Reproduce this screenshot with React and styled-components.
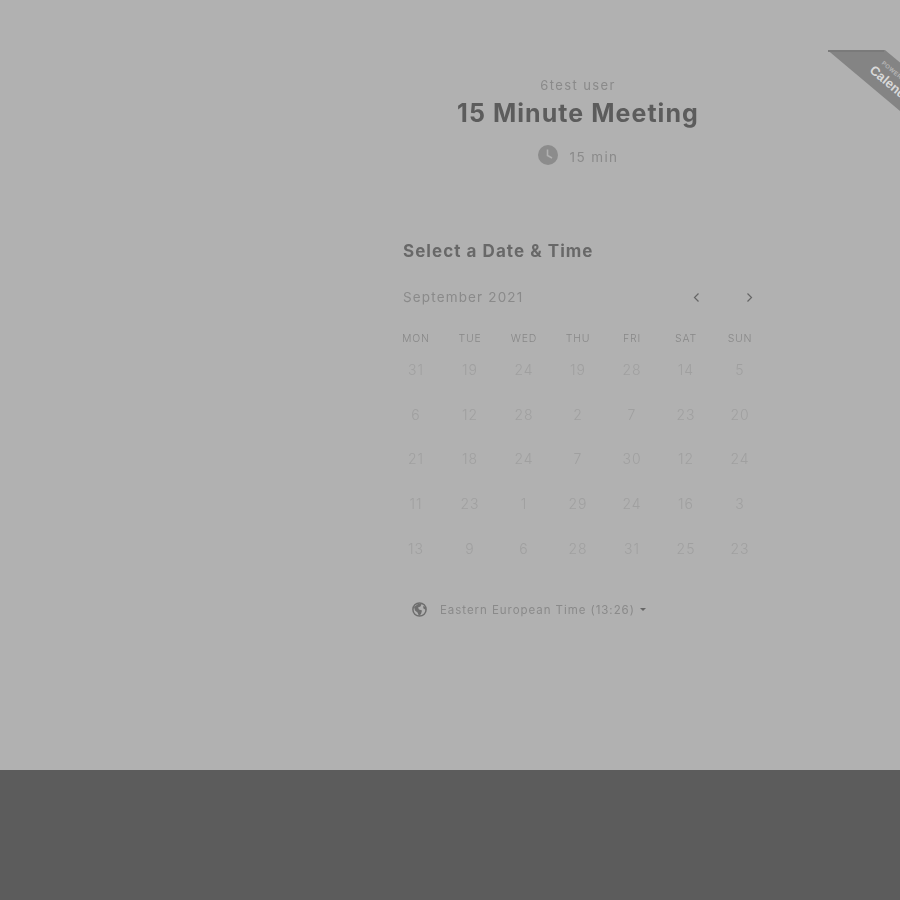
import React from 'react'
import styled, { createGlobalStyle } from 'styled-components'

const Global = createGlobalStyle`
html, body {
    margin: 0;
    padding: 0;
    background: #b1b1b1;
    font-family: "Inter", "Liberation Sans", sans-serif;
}
`
const Page = styled.div`
width: 900px;
height: 900px;
display: flex;
flex-direction: column;
position: relative;
overflow: hidden;
`
const Panel = styled.main`
height: 770px;
background: #b1b1b1;
padding: 75px 0 0 389px;
box-sizing: border-box;
filter: blur(0.4px);
`
const Footer = styled.footer`
flex: 1;
background: #5c5c5c;
`
const Column = styled.div`
width: 378px;
display: flex;
flex-direction: column;
`
const Header = styled.header`
display: flex;
flex-direction: column;
align-items: center;
`
const Host = styled.div`
font-size: 13px;
line-height: 20px;
letter-spacing: 1.4px;
color: #8a8a8a;
`
const Title = styled.h1`
margin: 2px 0 0;
font-size: 25px;
line-height: 32px;
font-weight: 700;
letter-spacing: 1.05px;
color: #5c5c5c;
`
const Duration = styled.div`
margin-top: 16px;
display: flex;
align-items: center;
gap: 12px;
font-size: 13.5px;
letter-spacing: 1.4px;
color: #8a8a8a;
height: 24px;
svg {
    margin-top: -4px;
}
`
const Picker = styled.section`
margin-top: 70px;
padding: 0 13px 0 14px;
display: flex;
flex-direction: column;
`
const Heading = styled.h2`
margin: 0;
font-size: 17px;
line-height: 24px;
font-weight: 700;
letter-spacing: 1.05px;
color: #686868;
`
const MonthRow = styled.div`
margin-top: 22px;
height: 24px;
display: flex;
align-items: center;
justify-content: space-between;
`
const Month = styled.span`
font-size: 13.5px;
letter-spacing: 1.15px;
color: #8a8a8a;
`
const Arrows = styled.div`
display: flex;
gap: 42px;
margin-right: -1px;
`
const Arrow = styled.svg`
width: 11px;
height: 11px;
fill: none;
stroke: #666;
stroke-width: 1.2;
display: block;
`
const Grid = styled.div`
margin: 20px -13px 0 -14px;
display: grid;
grid-template-columns: repeat(7, 54px);
grid-template-rows: 18px repeat(5, 44.8px);
`
const WeekDay = styled.div`
display: flex;
align-items: center;
justify-content: center;
font-size: 10.5px;
font-weight: 300;
letter-spacing: 0.8px;
color: #888;
`
const Day = styled.div`
display: flex;
align-items: center;
justify-content: center;
font-size: 14px;
font-weight: 300;
letter-spacing: 1px;
color: #a0a0a0;
`
const Zone = styled.div`
margin-top: 27px;
padding-left: 9px;
height: 24px;
display: flex;
align-items: center;
font-size: 11.5px;
letter-spacing: 0.95px;
color: #8a8a8a;
svg {
    margin-right: 13px;
}
`
const Caret = styled.span`
width: 0;
height: 0;
margin-left: 5px;
border-left: 3px solid transparent;
border-right: 3px solid transparent;
border-top: 3px solid #666;
`
const Corner = styled.div`
position: absolute;
top: 50px;
right: 0;
width: 72px;
height: 72px;
overflow: hidden;
`
const Band = styled.div`
position: absolute;
left: -13px;
top: 13.7px;
width: 160px;
height: 36.6px;
transform: rotate(40deg);
background: #848484;
display: flex;
flex-direction: column;
align-items: center;
justify-content: center;
font-family: "Liberation Sans", sans-serif;
`
const Powered = styled.div`
font-size: 6px;
line-height: 8px;
font-weight: 700;
letter-spacing: 0.4px;
color: #b4b4b4;
`
const Brand = styled.div`
font-size: 13px;
line-height: 15px;
font-weight: 700;
color: #d9d9d9;
`
const Fold = styled.div`
position: absolute;
top: 0;
left: 0;
width: 56px;
height: 2px;
background: #7a7a7a;
`

const DAYS = ['MON', 'TUE', 'WED', 'THU', 'FRI', 'SAT', 'SUN']
const DATES = [
    31, 19, 24, 19, 28, 14, 5,
    6, 12, 28, 2, 7, 23, 20,
    21, 18, 24, 7, 30, 12, 24,
    11, 23, 1, 29, 24, 16, 3,
    13, 9, 6, 28, 31, 25, 23,
]

const ClockIcon = () => (
    <svg width="20" height="20" viewBox="0 0 20 20">
        <circle cx="10" cy="10" r="10" fill="#8c8c8c" />
        <path d="M9.5 4.5V10.5L14 13" fill="none" stroke="#b1b1b1" strokeWidth="1.6" />
    </svg>
)

const GlobeIcon = () => (
    <svg width="15" height="15" viewBox="0 0 15 15">
        <circle cx="7.5" cy="7.5" r="6.6" fill="#b1b1b1" stroke="#6e6e6e" strokeWidth="1.5" />
        <path d="M2 5 L6 2 L9.5 2 L8.5 4.5 L6 5.5 L7 7.5 L10 8.5 L9 12 L7 14 L5.5 10.5 L3 8.5 Z" fill="#6e6e6e" />
        <path d="M11 4 L14 5.5 L14 8 L11.5 6.5 Z" fill="#6e6e6e" />
    </svg>
)

const App = () => {
    return (
        <Page>
            <Global />
            <Panel>
                <Column>
                    <Header>
                        <Host>6test user</Host>
                        <Title>15 Minute Meeting</Title>
                        <Duration><ClockIcon />15 min</Duration>
                    </Header>
                    <Picker>
                        <Heading>Select a Date &amp; Time</Heading>
                        <MonthRow>
                            <Month>September 2021</Month>
                            <Arrows>
                                <Arrow viewBox="0 0 11 11"><path d="M7.5 1.5L3.5 5.5L7.5 9.5" /></Arrow>
                                <Arrow viewBox="0 0 11 11"><path d="M3.5 1.5L7.5 5.5L3.5 9.5" /></Arrow>
                            </Arrows>
                        </MonthRow>
                        <Grid>
                            {DAYS.map(d => <WeekDay key={d}>{d}</WeekDay>)}
                            {DATES.map((d, i) => <Day key={i}>{d}</Day>)}
                        </Grid>
                        <Zone>
                            <GlobeIcon />
                            Eastern European Time (13:26)
                            <Caret />
                        </Zone>
                    </Picker>
                </Column>
            </Panel>
            <Footer />
            <Corner>
                <Band>
                    <Powered>POWERED BY</Powered>
                    <Brand>Calendly</Brand>
                </Band>
                <Fold />
            </Corner>
        </Page>
    )
}

export default App
